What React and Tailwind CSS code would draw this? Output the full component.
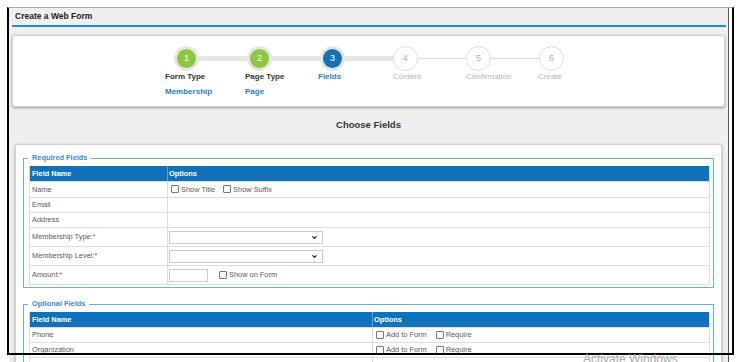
import { ChevronDown } from 'lucide-react';

const steps = [
  { n: 1, label: 'Form Type', sub: 'Membership', state: 'done', lm: 'ml-0' },
  { n: 2, label: 'Page Type', sub: 'Page', state: 'done', lm: 'ml-[7px]' },
  { n: 3, label: 'Fields', state: 'current', lm: 'ml-[7px]' },
  { n: 4, label: 'Content', state: 'todo', lm: 'ml-[9px]' },
  { n: 5, label: 'Confirmation', state: 'todo', lm: 'ml-[9px]' },
  { n: 6, label: 'Create', state: 'todo', lm: 'ml-[8px]' },
];

function Circle({ n, state }) {
  if (state === 'todo') {
    return (
      <div className="flex h-[25px] w-[25px] shrink-0 items-center justify-center rounded-full border border-[#dedede] bg-white text-[9px] text-[#b0b0b0]">
        {n}
      </div>
    );
  }
  const fill = state === 'done' ? 'bg-[#8dc63f]' : 'bg-[#1670b8]';
  return (
    <div className="flex h-[25px] w-[25px] shrink-0 items-center justify-center rounded-full bg-[#e6e6e6]">
      <div className={`flex h-[19px] w-[19px] items-center justify-center rounded-full text-[9px] text-white ${fill}`}>
        {n}
      </div>
    </div>
  );
}

function Checkbox({ label, className = '' }) {
  return (
    <span className={`flex items-center ${className}`}>
      <span className="h-[8px] w-[8px] rounded-[1px] border border-[#777] bg-white" />
      <span className="ml-[2px]">{label}</span>
    </span>
  );
}

function Select() {
  return (
    <div className="flex h-[13px] w-[154px] items-center justify-end border border-[#c9c9c9] bg-white pr-[4px]">
      <ChevronDown size={7} strokeWidth={4} className="text-[#222]" />
    </div>
  );
}

function Req({ children }) {
  return (
    <span>
      {children}
      <span className="text-[#e53935]">*</span>
    </span>
  );
}

function Row({ h, cols, name, children }) {
  return (
    <div className={`grid border-t border-[#dddddd] ${h} ${cols}`}>
      <div className="flex items-center pl-[2px]">{name}</div>
      <div className="flex items-center border-l border-[#dddddd]">{children}</div>
    </div>
  );
}

function Section({ title, cols, children, className = '' }) {
  return (
    <fieldset className={`mx-[7px] border border-[#6aaee2] pb-[2px] pl-[5px] pr-[3px] pt-[3px] ${className}`}>
      <legend className="ml-[-1px] px-[4px] text-[7.4px] font-bold leading-[10px] text-[#3a8bd2]">{title}</legend>
      <div className="border border-t-0 border-[#dddddd] text-[7.4px] text-[#595959]">
        <div className={`grid h-[15px] bg-[#0f72ba] font-bold text-white ${cols}`}>
          <div className="flex items-center pl-[2px]">Field Name</div>
          <div className="flex items-center border-l border-[#5f9fd4] pl-[1px]">Options</div>
        </div>
        {children}
      </div>
    </fieldset>
  );
}

export default function App() {
  return (
    <div className="relative h-[362px] w-[744px] overflow-hidden bg-white font-['Liberation_Sans',Arial,sans-serif]">
      <div className="ml-[9px] mt-[8px] w-[720px] border-r border-[#555] bg-[#efefef] px-[3px] pb-[20px]">
        {/* Title bar */}
        <div className="h-[17px] pl-[3px] pt-[3px] text-[8.5px] font-bold leading-[10px] text-[#222]">
          Create a Web Form
        </div>
        <div className="mr-[-1px] h-[2px] bg-[#2b88da]" />

        {/* Wizard */}
        <div className="mt-[8px] h-[72px] rounded-[3px] border border-[#cfcfcf] bg-white pt-[10px] shadow-[0_1px_3px_rgba(0,0,0,0.35)]">
          <div className="flex items-center pl-[161px]">
            {steps.map((s, i) => (
              <div key={s.n} className="flex items-center">
                <Circle n={s.n} state={s.state} />
                {i < steps.length - 1 &&
                  (i < 3 ? (
                    <div className="h-[5px] w-[48px] bg-[#e6e6e6]" />
                  ) : (
                    <div className="h-px w-[48px] bg-[#d8d8d8]" />
                  ))}
              </div>
            ))}
          </div>
          <div className="mt-[1px] flex pl-[152px] text-[8px] font-bold leading-[10px]">
            {steps.map((s) => (
              <div key={s.n} className="w-[73px] shrink-0">
                <div className={`${s.lm} ${s.state === 'todo' ? 'font-normal text-[#b3b3b3]' : s.state === 'current' ? 'text-[#2a7dcd]' : 'text-[#333]'}`}>
                  {s.label}
                </div>
                {s.sub && <div className={`${s.lm} mt-[5px] text-[#2a7dcd]`}>{s.sub}</div>}
              </div>
            ))}
          </div>
        </div>

        <div className="mt-[12px] text-center text-[9.5px] font-bold leading-[12px] text-[#333]">Choose Fields</div>

        {/* Fields */}
        <div className="mx-[3px] mt-[13px] rounded-[2px] border border-[#d0d0d0] bg-white pb-[20px] pt-[8px] shadow-[0_1px_3px_rgba(0,0,0,0.3)]">
          <Section title="Required Fields" cols="grid-cols-[137px_1fr]">
            <Row h="h-[16px]" cols="grid-cols-[137px_1fr]" name="Name">
              <Checkbox label="Show Title" className="ml-[3px]" />
              <Checkbox label="Show Suffix" className="ml-[8px]" />
            </Row>
            <Row h="h-[15px]" cols="grid-cols-[137px_1fr]" name="Email" />
            <Row h="h-[15px]" cols="grid-cols-[137px_1fr]" name="Address" />
            <Row h="h-[19px]" cols="grid-cols-[137px_1fr]" name={<Req>Membership Type:</Req>}>
              <div className="ml-[1px]"><Select /></div>
            </Row>
            <Row h="h-[19px]" cols="grid-cols-[137px_1fr]" name={<Req>Membership Level:</Req>}>
              <div className="ml-[1px]"><Select /></div>
            </Row>
            <Row h="h-[19px]" cols="grid-cols-[137px_1fr]" name={<Req>Amount:</Req>}>
              <div className="ml-[1px] h-[13px] w-[39px] border border-[#cccccc] bg-white" />
              <Checkbox label="Show on Form" className="ml-[11px]" />
            </Row>
          </Section>

          <Section title="Optional Fields" cols="grid-cols-[342px_1fr]" className="mt-[11px]">
            <Row h="h-[15px]" cols="grid-cols-[342px_1fr]" name="Phone">
              <Checkbox label="Add to Form" className="ml-[3px]" />
              <Checkbox label="Require" className="ml-[9px]" />
            </Row>
            <Row h="h-[15px]" cols="grid-cols-[342px_1fr]" name="Organization">
              <Checkbox label="Add to Form" className="ml-[3px]" />
              <Checkbox label="Require" className="ml-[9px]" />
            </Row>
            <Row h="h-[15px]" cols="grid-cols-[342px_1fr]" name="" />
          </Section>
        </div>
      </div>

      {/* annotation frame drawn over the capture */}
      <div className="pointer-events-none absolute left-[7px] top-[7px] h-[348px] w-[727px] border-2 border-t border-black border-t-[#aaaaaa]" />

      <div className="pointer-events-none absolute left-[583px] top-[350px] text-[12px] text-[#a9a9a9]">Activate Windows</div>
    </div>
  );
}
